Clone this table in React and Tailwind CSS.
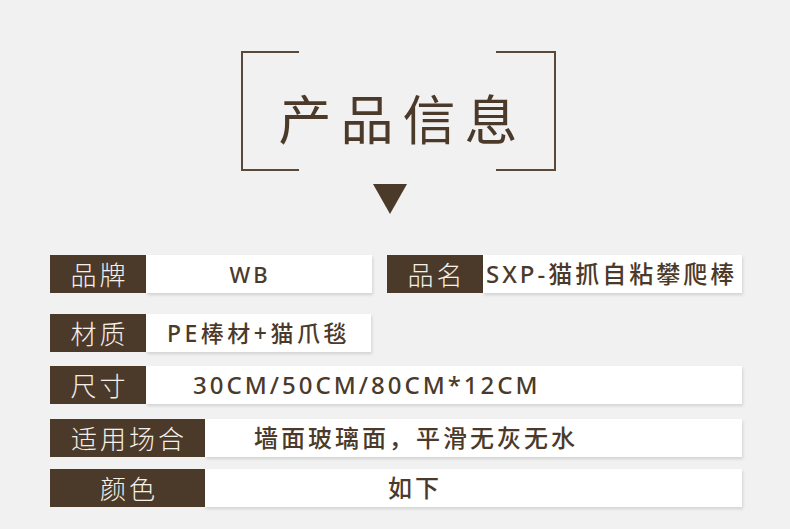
import React from "react";

const font = { fontFamily: '"Noto Sans", "Noto Sans CJK SC", sans-serif' };

function Label({ w, children }) {
  return (
    <div
      className={`${w} h-full bg-[#4b3a2a] flex items-center justify-center text-[26px] font-light text-[#f4f0ea] tracking-[3px] pl-[3px] leading-none shrink-0`}
      style={{ fontFamily: '"Noto Sans CJK SC", sans-serif' }}
    >
      {children}
    </div>
  );
}

function Value({ w, className = "", children }) {
  return (
    <div
      className={`${w} h-full bg-white flex items-center text-[#4b3a2a] font-medium leading-none whitespace-nowrap shadow-[1px_2px_3px_rgba(0,0,0,0.13)] ${className}`}
      style={font}
    >
      {children}
    </div>
  );
}

export default function App() {
  return (
    <div className="w-[790px] h-[529px] bg-[#f1f1f1] pt-[51px] overflow-hidden" style={font}>
      {/* Title bracket */}
      <div className="ml-[241px] w-[315px] h-[120px] relative border-l-2 border-r-2 border-[#5a4838] flex items-center justify-center pt-[12px]">
        <span className="absolute left-0 top-0 w-[56px] h-[2px] bg-[#5a4838]" />
        <span className="absolute right-0 top-0 w-[58px] h-[2px] bg-[#5a4838]" />
        <span className="absolute left-0 bottom-0 w-[56px] h-[2px] bg-[#5a4838]" />
        <span className="absolute right-0 bottom-0 w-[58px] h-[2px] bg-[#5a4838]" />
        <span
          className="text-[53px] font-normal text-[#4b3a2a] tracking-[9px] pl-[8px] leading-none"
          style={{ fontFamily: '"Noto Sans CJK SC", sans-serif' }}
        >
          产品信息
        </span>
      </div>

      {/* Triangle */}
      <div className="ml-[373px] mt-[13px] w-[34px] h-[30px]">
        <svg width="34" height="30" viewBox="0 0 34 30">
          <polygon points="0,0 34,0 17,30" fill="#4b3a2a" />
        </svg>
      </div>

      {/* Rows */}
      <div className="ml-[50px] mt-[41px] flex flex-col">
        <div className="flex h-[38px]">
          <Label w="w-[96px]">品牌</Label>
          <Value w="w-[226px]" className="justify-center pr-[18px] text-[22px] tracking-[3px]">WB</Value>
          <div className="w-[15px] shrink-0" />
          <Label w="w-[96px]">品名</Label>
          <Value w="w-[259px]" className="pl-[3px] text-[24px] tracking-[3px]">SXP-猫抓自粘攀爬棒</Value>
        </div>

        <div className="flex h-[38px] mt-[21px]">
          <Label w="w-[96px]">材质</Label>
          <Value w="w-[225px]" className="pl-[21px] text-[23px] tracking-[3.5px]">PE棒材+猫爪毯</Value>
        </div>

        <div className="flex h-[38px] mt-[14px]">
          <Label w="w-[96px]">尺寸</Label>
          <Value w="w-[596px]" className="pl-[47px] text-[24px] tracking-[3px]">30CM/50CM/80CM*12CM</Value>
        </div>

        <div className="flex h-[38px] mt-[15px]">
          <Label w="w-[155px]">适用场合</Label>
          <Value w="w-[537px]" className="pl-[49px] text-[24px] tracking-[3px]">墙面玻璃面，平滑无灰无水</Value>
        </div>

        <div className="flex h-[38px] mt-[12px]">
          <Label w="w-[155px]">颜色</Label>
          <Value w="w-[537px]" className="pl-[183px] text-[24px] tracking-[3px]">如下</Value>
        </div>
      </div>
    </div>
  );
}
